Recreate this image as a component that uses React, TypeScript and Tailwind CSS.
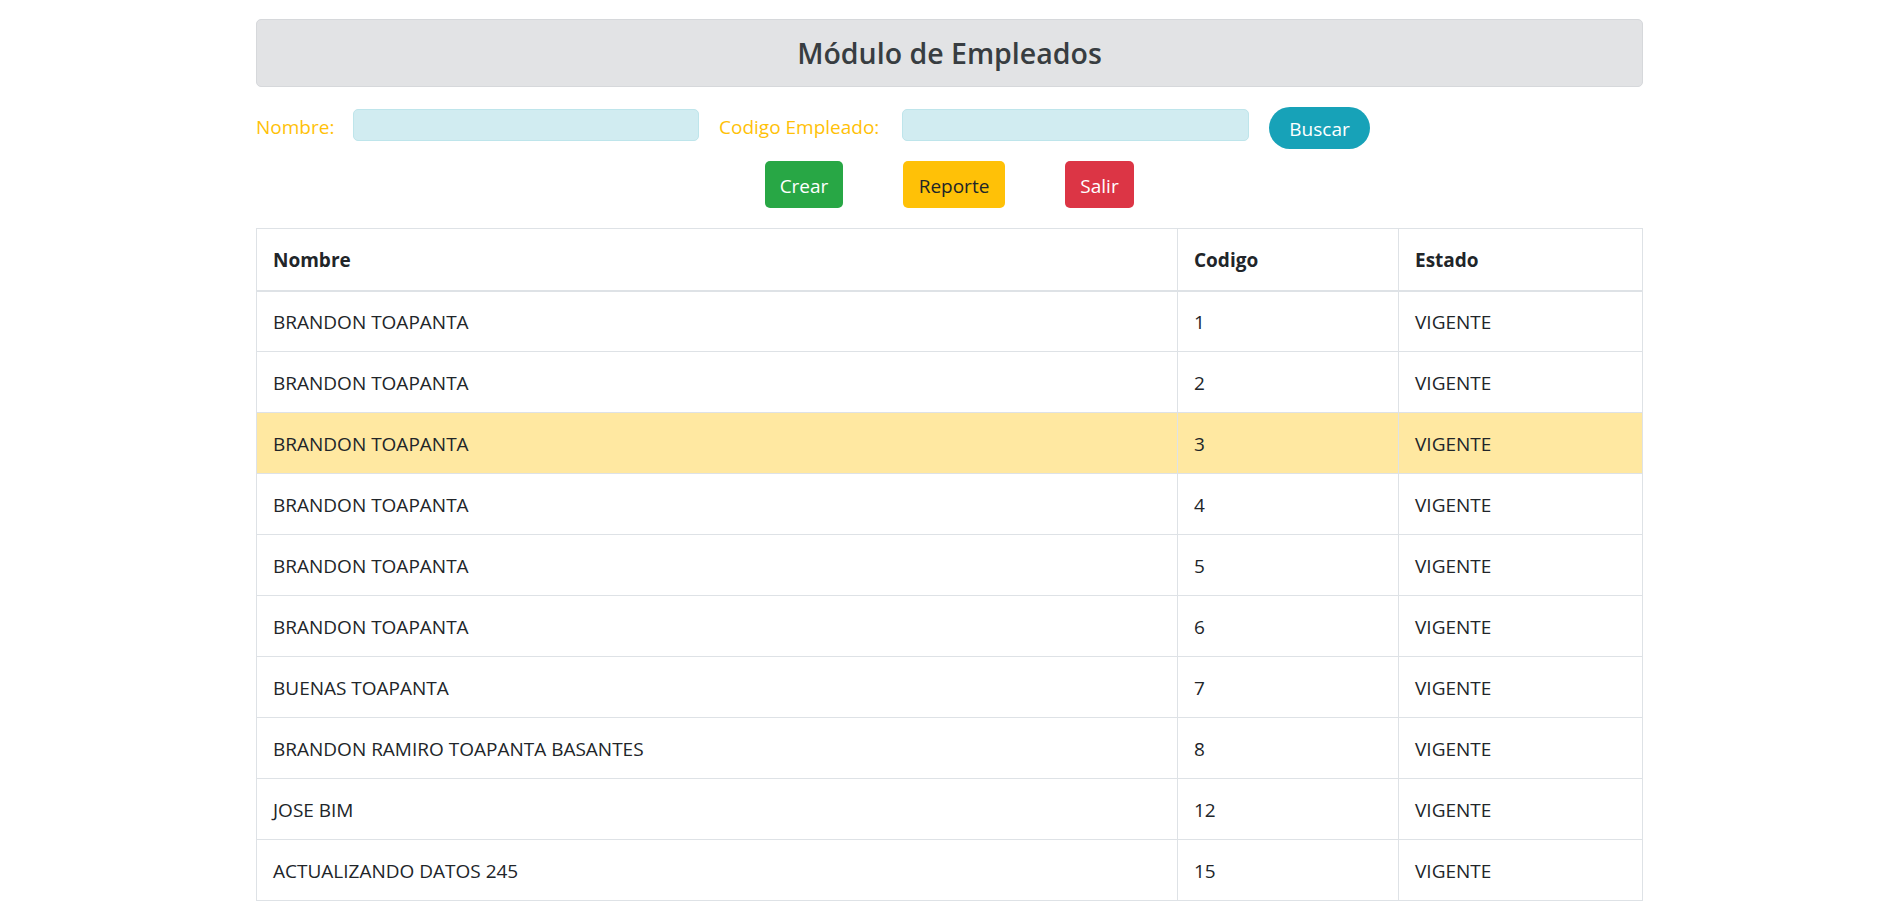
import React, { useState } from "react";

const empleados = [
  { nombre: "BRANDON TOAPANTA", codigo: 1, estado: "VIGENTE" },
  { nombre: "BRANDON TOAPANTA", codigo: 2, estado: "VIGENTE" },
  { nombre: "BRANDON TOAPANTA", codigo: 3, estado: "VIGENTE" },
  { nombre: "BRANDON TOAPANTA", codigo: 4, estado: "VIGENTE" },
  { nombre: "BRANDON TOAPANTA", codigo: 5, estado: "VIGENTE" },
  { nombre: "BRANDON TOAPANTA", codigo: 6, estado: "VIGENTE" },
  { nombre: "BUENAS TOAPANTA", codigo: 7, estado: "VIGENTE" },
  { nombre: "BRANDON RAMIRO TOAPANTA BASANTES", codigo: 8, estado: "VIGENTE" },
  { nombre: "JOSE BIM", codigo: 12, estado: "VIGENTE" },
  { nombre: "ACTUALIZANDO DATOS 245", codigo: 15, estado: "VIGENTE" },
];

export default function App() {
  const [nombre, setNombre] = useState("");
  const [codigo, setCodigo] = useState("");
  const [seleccionado] = useState(3);

  return (
    <div className="h-screen overflow-hidden bg-white font-['Open_Sans',sans-serif] text-[#212529]">
      <div className="w-[1387px] ml-[256px] pt-[19px]">
        {/* Encabezado */}
        <div className="h-[68px] flex items-center justify-center bg-[#e2e3e5] border border-[#d6d8db] rounded-[5px]">
          <h3 className="text-[28.5px] font-semibold text-[#383d41] leading-none">
            Módulo de Empleados
          </h3>
        </div>

        {/* Busqueda */}
        <div className="mt-[20px] h-[42px] flex items-start gap-5 text-[19px] text-[#ffc107]">
          <label className="w-[77px] mt-[6px] leading-[28px] whitespace-nowrap">Nombre:</label>
          <input
            type="text"
            value={nombre}
            onChange={(e) => setNombre(e.target.value)}
            className="w-[346px] h-[32px] mt-[2px] bg-[#d1ecf1] border border-[#bee5eb] rounded-[5px] px-2 outline-none"
          />
          <label className="w-[163px] mt-[6px] leading-[28px] whitespace-nowrap">Codigo Empleado:</label>
          <input
            type="text"
            value={codigo}
            onChange={(e) => setCodigo(e.target.value)}
            className="w-[347px] h-[32px] mt-[2px] bg-[#d1ecf1] border border-[#bee5eb] rounded-[5px] px-2 outline-none"
          />
          <button className="w-[101px] h-[42px] pt-[2px] rounded-full bg-[#17a2b8] text-white text-[19px]">
            Buscar
          </button>
        </div>

        {/* Acciones */}
        <div className="mt-[12px] flex justify-center gap-[60px] text-[19px]">
          <button className="w-[78px] h-[47px] pt-[3px] rounded-[5px] bg-[#28a745] text-white">
            Crear
          </button>
          <button className="w-[102px] h-[47px] pt-[3px] rounded-[5px] bg-[#ffc107] text-[#212529]">
            Reporte
          </button>
          <button className="w-[69px] h-[47px] pt-[3px] rounded-[5px] bg-[#dc3545] text-white">
            Salir
          </button>
        </div>

        {/* Tabla */}
        <table className="mt-[20px] w-full table-fixed border-collapse border border-[#dee2e6] text-[19px]">
          <thead>
            <tr className="border-b-2 border-[#dee2e6]">
              <th className="w-[921px] h-[62px] px-4 pt-[2px] text-left font-bold border-r border-[#dee2e6]">
                Nombre
              </th>
              <th className="w-[221px] h-[62px] px-4 pt-[2px] text-left font-bold border-r border-[#dee2e6]">
                Codigo
              </th>
              <th className="h-[62px] px-4 pt-[2px] text-left font-bold">Estado</th>
            </tr>
          </thead>
          <tbody>
            {empleados.map((e) => (
              <tr
                key={e.codigo}
                className={
                  "border-b border-[#dee2e6] " +
                  (e.codigo === seleccionado ? "bg-[#ffe8a1]" : "bg-white")
                }
              >
                <td className="h-[61px] px-4 pt-[2px] border-r border-[#dee2e6]">{e.nombre}</td>
                <td className="h-[61px] px-4 pt-[2px] border-r border-[#dee2e6]">{e.codigo}</td>
                <td className="h-[61px] px-4 pt-[2px]">{e.estado}</td>
              </tr>
            ))}
          </tbody>
        </table>
      </div>
    </div>
  );
}
